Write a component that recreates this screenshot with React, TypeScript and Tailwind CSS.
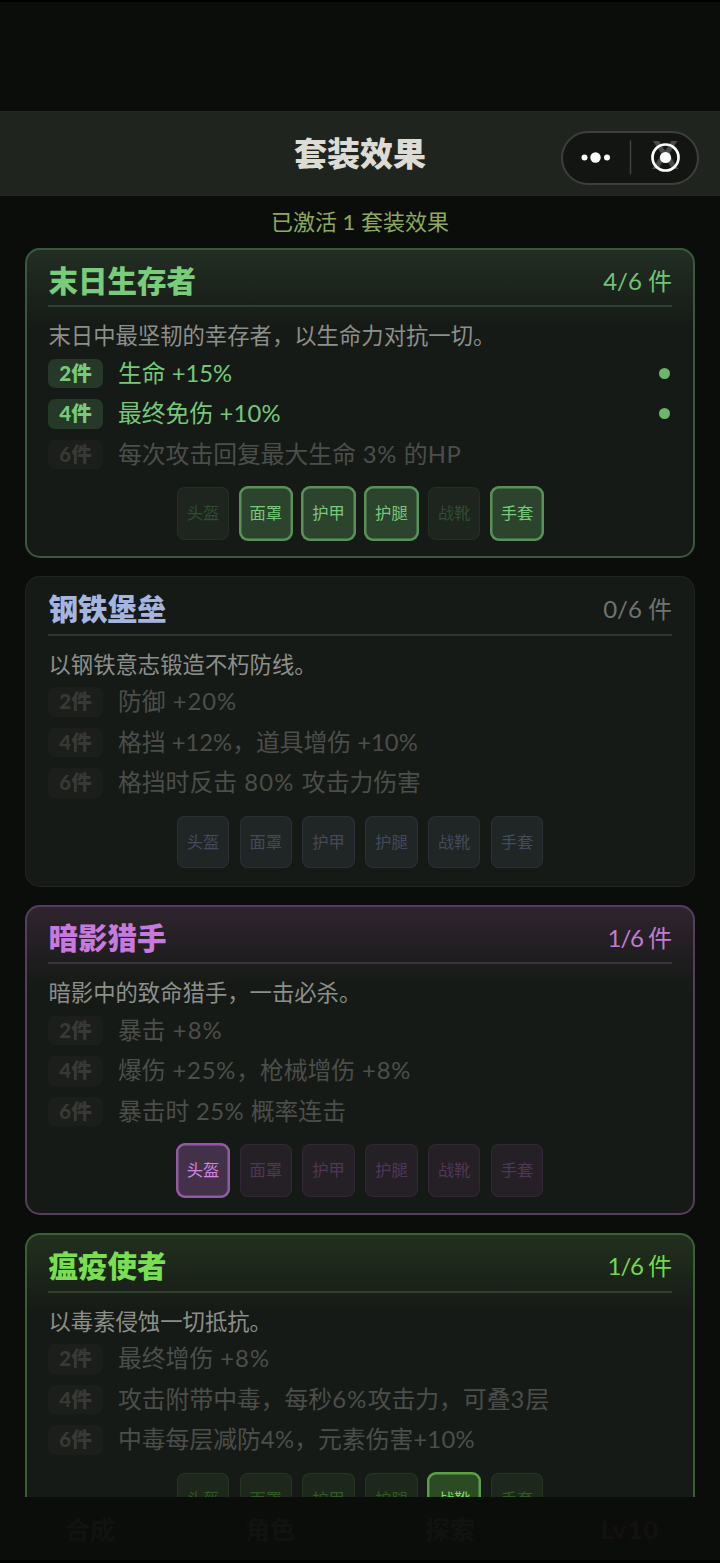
import React from 'react';
import clsx from 'clsx';

const SLOTS = ['头盔', '面罩', '护甲', '护腿', '战靴', '手套'];

type Theme = {
  card: string;
  title: string;
  count: string;
  divider: string;
  slotOff: string;
  slotOn: string;
};

type Effect = { text: string; on?: boolean; tracking?: string };

type GearSet = {
  name: string;
  count: number;
  desc: string;
  effects: Effect[];
  owned: number[];
  theme: Theme;
};

const SETS: GearSet[] = [
  {
    name: '末日生存者',
    count: 4,
    desc: '末日中最坚韧的幸存者，以生命力对抗一切。',
    effects: [
      { text: '生命 +15%', on: true },
      { text: '最终免伤 +10%', on: true, tracking: 'tracking-[0.2px]' },
      { text: '每次攻击回复最大生命 3% 的HP', tracking: 'tracking-[0.7px]' },
    ],
    owned: [1, 2, 3, 5],
    theme: {
      card: 'ring-2 ring-[#3a583b] bg-[linear-gradient(#222e23_0px,#161a16_80px)]',
      title: 'text-[#78cc7a]',
      count: 'text-[#72c475]',
      divider: 'bg-[#2e402f]',
      slotOff: 'bg-[#1d251e] ring-[#233024] text-[#2f4d31]',
      slotOn: 'bg-[#2c432d] ring-[#5a9159] text-[#78c97a]',
    },
  },
  {
    name: '钢铁堡垒',
    count: 0,
    desc: '以钢铁意志锻造不朽防线。',
    effects: [
      { text: '防御 +20%', tracking: 'tracking-[1px]' },
      { text: '格挡 +12%，道具增伤 +10%' },
      { text: '格挡时反击 80% 攻击力伤害', tracking: 'tracking-[1.2px]' },
    ],
    owned: [],
    theme: {
      card: 'ring-1 ring-[#20261f] bg-[#161a16]',
      title: 'text-[#a5b5df]',
      count: 'text-[#70736f]',
      divider: 'bg-[#2f3539]',
      slotOff: 'bg-[#202526] ring-[#2a3035] text-[#434a5b]',
      slotOn: '',
    },
  },
  {
    name: '暗影猎手',
    count: 1,
    desc: '暗影中的致命猎手，一击必杀。',
    effects: [
      { text: '暴击 +8%', tracking: 'tracking-[1.1px]' },
      { text: '爆伤 +25%，枪械增伤 +8%', tracking: 'tracking-[0.8px]' },
      { text: '暴击时 25% 概率连击', tracking: 'tracking-[0.5px]' },
    ],
    owned: [0],
    theme: {
      card: 'ring-2 ring-[#563d5c] bg-[linear-gradient(#30242f_0px,#161a16_80px)]',
      title: 'text-[#c879df]',
      count: 'text-[#c27bd5] tracking-[-1.1px]',
      divider: 'bg-[#3a333b]',
      slotOff: 'bg-[#242025] ring-[#312735] text-[#513657]',
      slotOn: 'bg-[#433049] ring-[#915c9f] text-[#cf86e4]',
    },
  },
  {
    name: '瘟疫使者',
    count: 1,
    desc: '以毒素侵蚀一切抵抗。',
    effects: [
      { text: '最终增伤 +8%', tracking: 'tracking-[1px]' },
      { text: '攻击附带中毒，每秒6%攻击力，可叠3层', tracking: 'tracking-[1.3px]' },
      { text: '中毒每层减防4%，元素伤害+10%', tracking: 'tracking-[0.3px]' },
    ],
    owned: [4],
    theme: {
      card: 'ring-2 ring-[#396030] bg-[linear-gradient(#22301e_0px,#161a16_80px)]',
      title: 'text-[#77df50]',
      count: 'text-[#72d94c] tracking-[-1.1px]',
      divider: 'bg-[#2f3f2b]',
      slotOff: 'bg-[#1d271b] ring-[#24361f] text-[#315923]',
      slotOn: 'bg-[#2c4a24] ring-[#5ba046] text-[#79df52]',
    },
  },
];

/** Applies tracking to the Latin runs only, leaving Chinese glyphs on their own grid. */
function MixedText({ text, tracking }: { text: string; tracking?: string }) {
  return (
    <>
      {text.split(/([ -~]+)/).map((part, i) =>
        i % 2 === 1 ? (
          <span key={i} className={tracking}>
            {part}
          </span>
        ) : (
          part
        ),
      )}
    </>
  );
}

function EffectRow({ pieces, effect }: { pieces: number; effect: Effect }) {
  return (
    <div className="flex h-[40.5px] items-center">
      <span
        className={clsx(
          'flex h-[29.5px] w-[55px] items-center justify-center rounded-[7px] text-[20.5px] leading-none font-black',
          effect.on ? 'bg-[#263828] text-[#78ca79]' : 'bg-[#1c1e1b] text-[#373936]',
        )}
      >
        <span className="-mt-px">{pieces}件</span>
      </span>
      <span
        className={clsx(
          'ml-[15px] flex-1 text-[23.8px] leading-none whitespace-pre',
          effect.on ? 'text-[#75c878]' : 'text-[#4b4e4a]',
        )}
      >
        <MixedText text={effect.text} tracking={effect.tracking} />
      </span>
      {effect.on && <span className="mr-[2px] size-[11px] rounded-full bg-[#6cb66c]" />}
    </div>
  );
}

function SetCard({ set }: { set: GearSet }) {
  const { theme } = set;
  return (
    <section
      className={clsx('flex h-[310.5px] shrink-0 flex-col rounded-[15px] px-[23px] ring-inset', theme.card)}
    >
      <header className="flex h-[57.5px] items-center justify-between pt-[8px]">
        <h2 className={clsx('ml-[0.5px] text-[29.5px] leading-none font-black', theme.title)}>{set.name}</h2>
        <span className={clsx('text-[24px] leading-none', theme.count)}>
          {set.count}/6 <span className="tracking-normal">件</span>
        </span>
      </header>
      <div className={clsx('h-[2px] shrink-0', theme.divider)} />
      <p className="h-[45.8px] shrink-0 pt-[18px] pl-[0.5px] text-[22.35px] leading-none text-[#8d8f8b]">
        {set.desc}
      </p>
      {set.effects.map((effect, i) => (
        <EffectRow key={effect.text} pieces={(i + 1) * 2} effect={effect} />
      ))}
      <div className="mt-[12.7px] flex justify-center gap-[10.3px]">
        {SLOTS.map((slot, i) => {
          const on = set.owned.includes(i);
          return (
            <div
              key={slot}
              className={clsx(
                'flex items-center justify-center text-[16.3px] leading-none ring-inset',
                on
                  ? '-m-[1px] size-[54.5px] rounded-[9px] ring-[2.5px]'
                  : 'size-[52.5px] rounded-[8px] ring-1',
                on ? theme.slotOn : theme.slotOff,
              )}
            >
              {slot}
            </div>
          );
        })}
      </div>
    </section>
  );
}

function Capsule() {
  return (
    <div className="absolute top-[18.500px] left-[560.500px] flex h-[54px] w-[138.500px] items-center rounded-full border-2 border-[#3c3f3b] bg-[#131512]">
      <svg width="135" height="50" viewBox="0 0 135 50" className="shrink-0">
        <circle cx="21.500" cy="24.500" r="3" fill="#fff" />
        <circle cx="32.500" cy="24.500" r="5.200" fill="#fff" />
        <circle cx="44" cy="24.500" r="3" fill="#fff" />
        <path d="M67.500 7.500v34" stroke="#414340" strokeWidth="1.500" />
        <text
          x="102"
          y="35.500"
          textAnchor="middle"
          fill="#484a47"
          className="font-['Liberation_Sans',sans-serif] text-[40px] font-bold"
        >
          X
        </text>
        <circle cx="102.500" cy="24.500" r="13" fill="none" stroke="#fff" strokeWidth="2.700" />
        <circle cx="102.500" cy="24.500" r="5.600" fill="#fff" />
      </svg>
    </div>
  );
}

export default function App() {
  return (
    <div className="flex h-[1563px] w-[720px] flex-col overflow-hidden bg-[#0b0d0a] font-[Lato,'Noto_Sans_CJK_SC',sans-serif]">
      <div className="h-[111px] shrink-0 border-t-2 border-black" />
      <div className="relative flex h-[85px] shrink-0 items-center justify-center border-y border-[#232822] bg-[#20241f]">
        <h1 className="text-[33px] leading-none font-black text-[#dcdcd5]">套装效果</h1>
        <Capsule />
      </div>
      <p className="flex h-[51.9px] shrink-0 items-center justify-center text-[22px] leading-none text-[#8fa95a]">
        已激活 1 套装效果
      </p>
      <main className="flex h-[1249.1px] shrink-0 flex-col gap-[18px] overflow-hidden px-[25px]">
        {SETS.map((set) => (
          <SetCard key={set.name} set={set} />
        ))}
      </main>
      <nav className="grid flex-1 grid-cols-4 border-b-[3px] border-black text-center text-[25px] leading-none font-bold text-[#111310]">
        {['合成', '角色', '探索', 'Lv10'].map((tab) => (
          <span key={tab} className="pt-[20px] last:tracking-[1.500px] last:text-[#14110e]">
            {tab}
          </span>
        ))}
      </nav>
    </div>
  );
}
